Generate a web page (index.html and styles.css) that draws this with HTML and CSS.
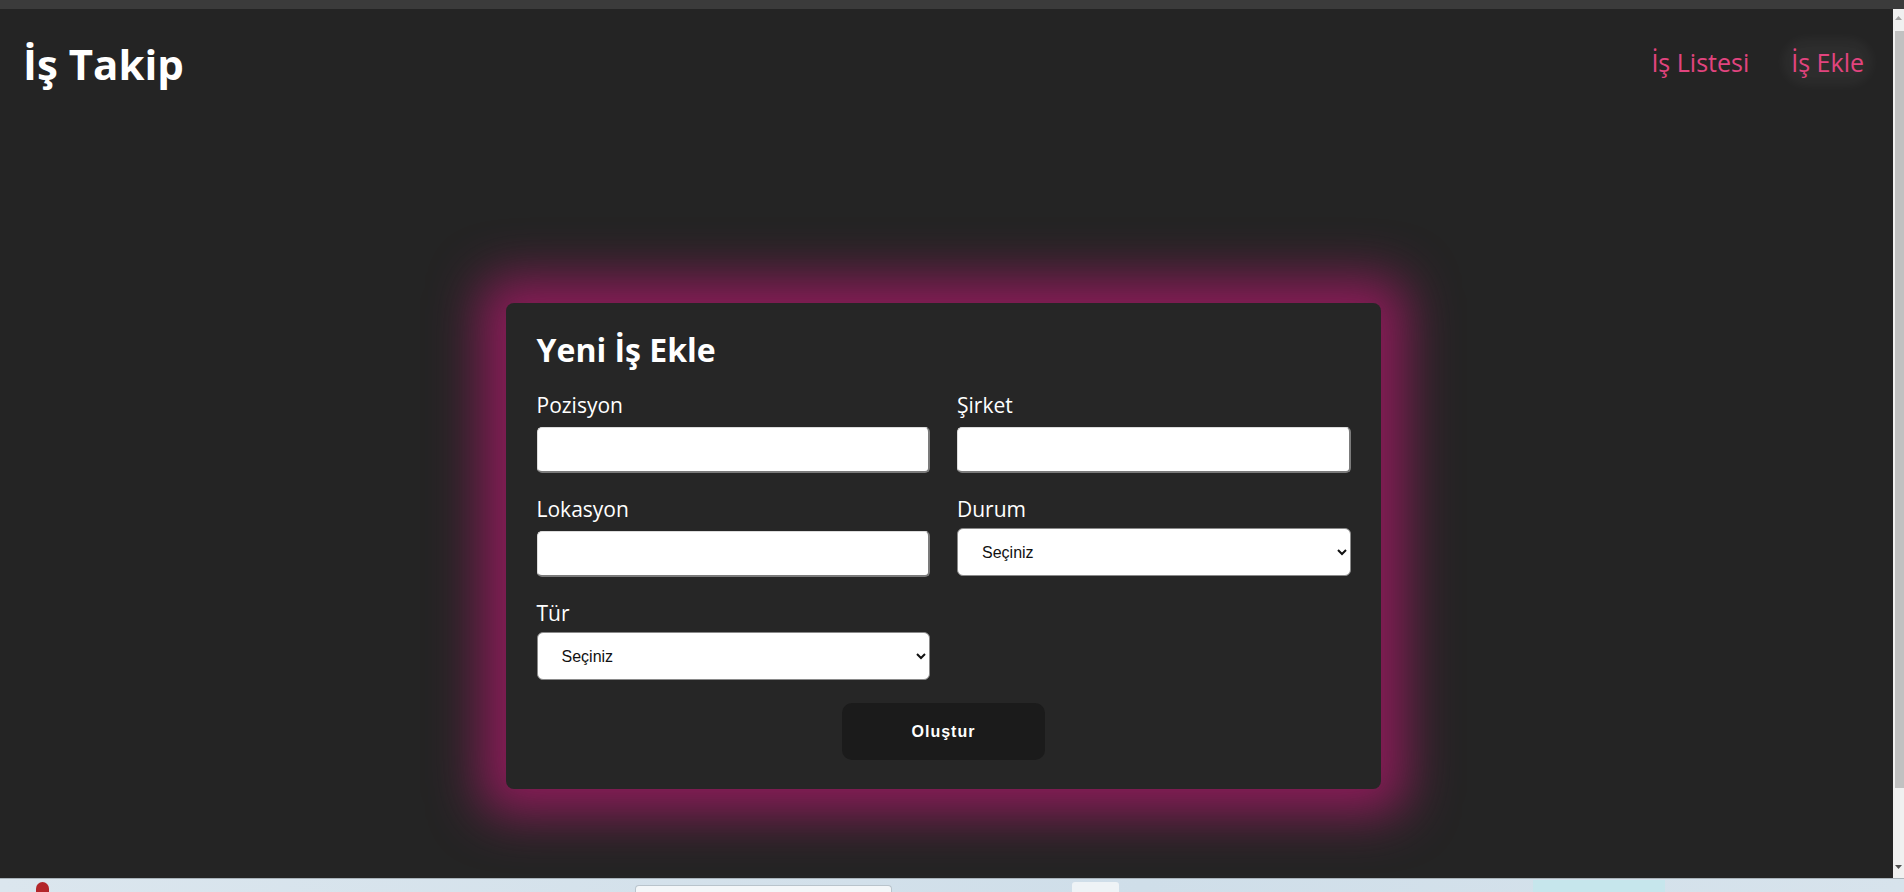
FILE: index.html
```html
<!DOCTYPE html>
<html lang="tr">
<head>
<meta charset="utf-8">
<title>İş Takip</title>
<link rel="stylesheet" href="styles.css">
</head>
<body>
<div class="chrome-top"></div>
<div class="viewport">
  <div class="page">
    <header class="topbar">
      <div class="logo">İş Takip</div>
      <nav class="nav">
        <a class="nav-link" href="#">İş Listesi</a>
        <a class="nav-link active" href="#">İş Ekle</a>
      </nav>
    </header>
    <main class="main">
      <form class="card">
        <h2 class="card-title">Yeni İş Ekle</h2>
        <div class="grid">
          <div class="field">
            <label class="label">Pozisyon</label>
            <input class="input" type="text">
          </div>
          <div class="field">
            <label class="label">Şirket</label>
            <input class="input" type="text">
          </div>
          <div class="field">
            <label class="label">Lokasyon</label>
            <input class="input" type="text">
          </div>
          <div class="field">
            <label class="label">Durum</label>
            <select class="select"><option>Seçiniz</option></select>
          </div>
          <div class="field">
            <label class="label">Tür</label>
            <select class="select"><option>Seçiniz</option></select>
          </div>
        </div>
        <button class="btn" type="button">Oluştur</button>
      </form>
    </main>
  </div>
  <div class="scrollbar">
    <svg class="sb-arrow" width="11" height="10" viewBox="0 0 11 10"><path d="M2 7 L5.5 3 L9 7 Z" fill="#a3a3a3"/></svg>
    <div class="sb-thumb"></div>
    <svg class="sb-arrow sb-down" width="11" height="10" viewBox="0 0 11 10"><path d="M2 3 L5.5 7 L9 3 Z" fill="#505050"/></svg>
  </div>
</div>
<div class="taskbar">
  <span class="tb-red"></span>
  <span class="tb-white"></span>
  <span class="tb-small"></span>
  <span class="tb-cyan"></span>
</div>
</body>
</html>
```
FILE: styles.css
```css
html, body {
  margin: 0;
  padding: 0;
}
body {
  height: 892px;
  overflow: hidden;
  display: flex;
  flex-direction: column;
  background: #242424;
  font-family: "Open Sans", "Noto Sans", sans-serif;
  color: #fff;
}
.chrome-top {
  height: 9px;
  background: #3b3b3b;
  flex: none;
}
.viewport {
  flex: 1;
  display: flex;
  min-height: 0;
}
.page {
  flex: 1;
  overflow: hidden;
  background: #242424;
}
.topbar {
  height: 92px;
  display: flex;
  justify-content: space-between;
  align-items: flex-start;
  padding: 0 29px 0 23px;
}
.logo {
  font-size: 42px;
  font-weight: 700;
  line-height: 48px;
  margin-top: 31px;
  color: #fff;
}
.nav {
  display: flex;
  gap: 42px;
  margin-top: 38px;
}
.nav-link {
  font-size: 25px;
  line-height: 30px;
  color: #e2447f;
  text-decoration: none;
}
.nav-link.active {
  border-radius: 18px;
  background: rgba(255, 255, 255, 0.045);
  box-shadow: 0 0 12px 8px rgba(255, 255, 255, 0.045);
}
.main {
  display: flex;
  justify-content: center;
  padding-top: 202px;
  padding-right: 7px;
}
.card {
  width: 875px;
  box-sizing: border-box;
  padding: 27px 30px 29px 31px;
  background: #262626;
  border-radius: 8px;
  box-shadow: 0 0 50px 26px rgba(138, 28, 88, 1);
}
.card-title {
  margin: 0;
  font-size: 32px;
  line-height: 40px;
  font-weight: 700;
}
.grid {
  margin-top: 22px;
  display: grid;
  grid-template-columns: 1fr 1fr;
  column-gap: 27px;
  row-gap: 23px;
}
.field {
  display: flex;
  flex-direction: column;
}
.label {
  font-size: 21px;
  line-height: 26px;
  color: #fff;
}
.input {
  margin-top: 9px;
  height: 46px;
  box-sizing: border-box;
  width: 100%;
  background: #fff;
  border-radius: 5px;
  border-style: solid;
  border-width: 1px 2px 2px 1px;
  border-color: #dcdcdc #7b7b7b #7b7b7b #dcdcdc;
  outline: none;
}
.select {
  margin-top: 6px;
  height: 48px;
  box-sizing: border-box;
  width: 100%;
  background: #fff;
  border: 1px solid #8a8a8a;
  border-radius: 6px;
  padding: 0 10px 0 20px;
  font-family: "Liberation Sans", Arial, sans-serif;
  font-size: 16px;
  color: #111;
}
.btn {
  display: block;
  margin: 23px auto 0;
  width: 203px;
  height: 57px;
  border: none;
  border-radius: 10px;
  background: #1b1b1b;
  color: #fff;
  font-family: "Liberation Sans", Arial, sans-serif;
  font-weight: 700;
  font-size: 16px;
  letter-spacing: 1px;
}
.scrollbar {
  width: 11px;
  flex: none;
  background: #f0f0f0;
  display: flex;
  flex-direction: column;
}
.sb-arrow {
  display: block;
  flex: none;
  margin-top: 4px;
}
.sb-thumb {
  height: 757px;
  margin: 8px 0 0 2px;
  background: #c1c1c1;
}
.sb-down {
  margin-top: auto;
  margin-bottom: 6px;
}
.taskbar {
  height: 14px;
  flex: none;
  box-sizing: border-box;
  border-top: 1px solid #a9b3ba;
  background: linear-gradient(90deg, #dbe6ee, #cfdee9 60%, #d7e3ec);
  display: flex;
  align-items: flex-end;
  overflow: hidden;
}
.tb-red {
  width: 13px;
  height: 10px;
  margin-left: 36px;
  background: #b3262a;
  border-radius: 7px 7px 0 0;
}
.tb-white {
  width: 255px;
  height: 6px;
  margin-left: 586px;
  background: #f4f7f9;
  border: 1px solid #b9c4cc;
  border-bottom: none;
  border-radius: 4px 4px 0 0;
}
.tb-small {
  width: 47px;
  height: 10px;
  margin-left: 180px;
  background: #eef3f6;
  border-radius: 3px 3px 0 0;
}
.tb-cyan {
  width: 132px;
  height: 12px;
  margin-left: 414px;
  background: #c6e6ec;
}
```
